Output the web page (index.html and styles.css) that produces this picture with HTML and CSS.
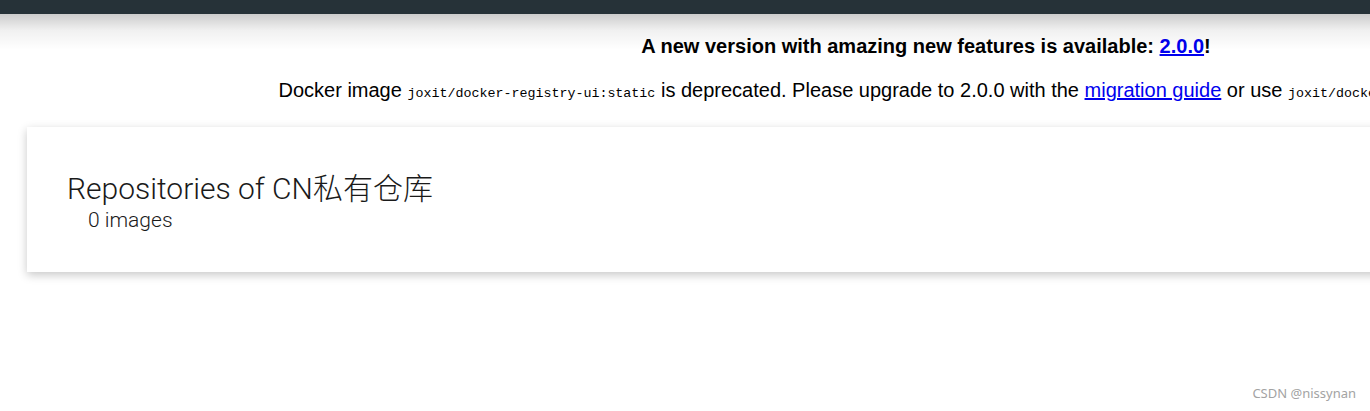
FILE: index.html
```html
<!DOCTYPE html>
<html>
<head>
<meta charset="utf-8">
<link rel="stylesheet" href="styles.css">
</head>
<body>
<header class="topbar"></header>
<main class="page">
  <section class="notice">
    <p class="notice-title">A new version with amazing new features is available: <a href="#">2.0.0</a>!</p>
    <p class="notice-text">Docker image <code>joxit/docker-registry-ui:static</code> is deprecated. Please upgrade to 2.0.0 with the <a href="#">migration guide</a> or use <code>joxit/docker-registry-ui:1.5-static</code>.</p>
  </section>
  <section class="card">
    <h2 class="card-title">Repositories of CN私有仓库</h2>
    <div class="card-sub">0 images</div>
  </section>
</main>
<div class="watermark">CSDN @nissynan</div>
</body>
</html>
```
FILE: styles.css
```css
html, body {
  margin: 0;
  padding: 0;
  background: #fff;
  overflow: hidden;
}
body {
  width: 1370px;
  height: 411px;
  position: relative;
  font-family: "Liberation Sans", Arial, sans-serif;
}
.topbar {
  height: 14px;
  background: #263238;
  position: relative;
  z-index: 2;
}
.topbar::after {
  content: "";
  position: absolute;
  left: 0;
  right: 0;
  top: 14px;
  height: 36px;
  background: linear-gradient(to bottom, rgba(0, 0, 0, 0.2), rgba(0, 0, 0, 0.06) 45%, rgba(0, 0, 0, 0));
  pointer-events: none;
}
.page {
  width: 1852px;
}
.notice {
  text-align: center;
  color: #000;
}
.notice p {
  margin: 0;
  white-space: nowrap;
}
.notice-title {
  font-weight: bold;
  font-size: 20px;
  line-height: 24px;
  padding-top: 20px;
}
.notice-text {
  font-size: 20px;
  line-height: 24px;
  padding-top: 20px;
}
.notice a {
  color: #0000ee;
  text-decoration: underline;
}
.notice code {
  font-family: "Liberation Mono", "Courier New", monospace;
  font-size: 13.33px;
}
.card {
  margin: 21px 0 0 27px;
  height: 145px;
  background: #fff;
  box-shadow: 0 3px 9px rgba(0, 0, 0, 0.22);
  padding: 44px 40px 0;
  box-sizing: border-box;
  font-family: Roboto, "Noto Sans CJK SC", sans-serif;
  color: #1a1a1a;
}
.card-title {
  margin: 0;
  font-weight: 300;
  font-size: 30px;
  line-height: 36px;
}
.card-sub {
  margin-left: 21px;
  font-size: 21px;
  font-weight: 300;
  line-height: 26px;
}
.watermark {
  position: absolute;
  right: 14px;
  bottom: 9px;
  font-family: "Noto Sans", sans-serif;
  font-size: 13px;
  color: #a3a3a3;
}
```
